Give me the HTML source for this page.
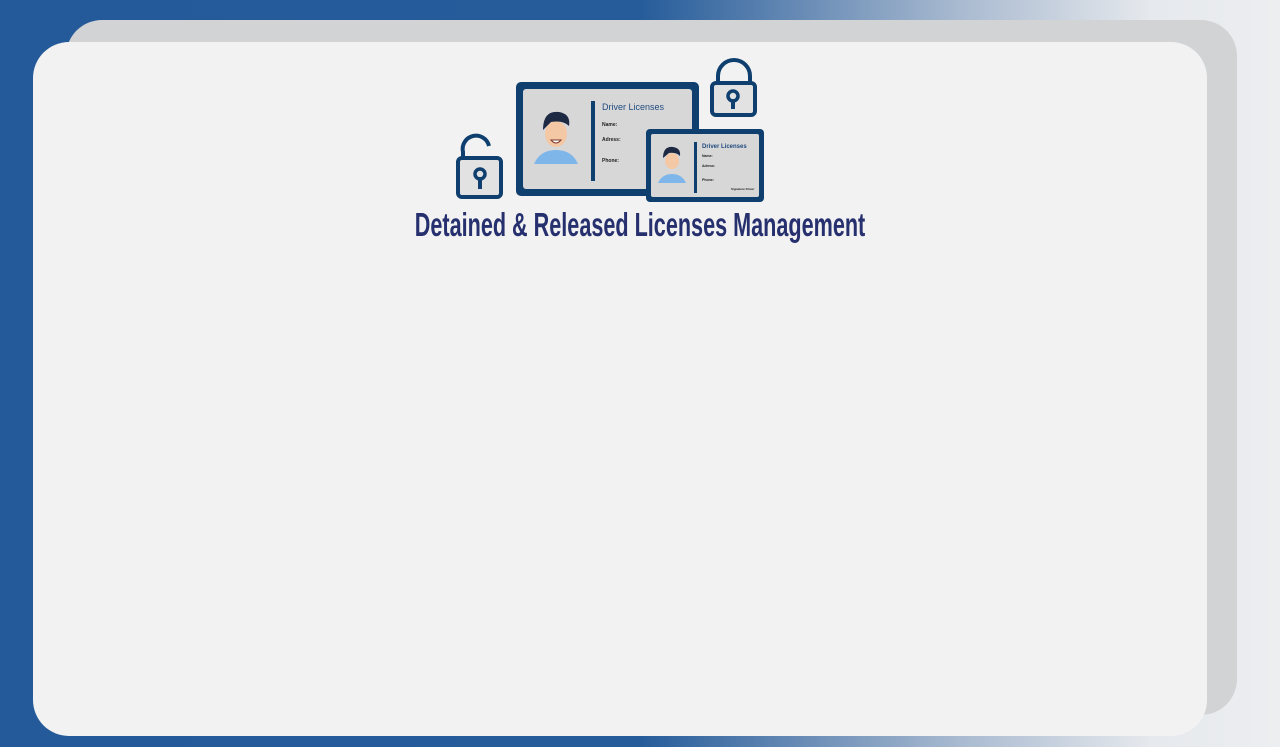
<!DOCTYPE html>
<html><head><style>
html,body{margin:0;padding:0}
body{width:1280px;height:747px;overflow:hidden;position:relative;background:linear-gradient(90deg,#245a99 0%,#265c9a 50%,#a9bad0 75%,#e6e9ed 90%,#eceef0 100%);font-family:"Liberation Sans",sans-serif}
.back{position:absolute;left:66px;top:20px;width:1171px;height:695px;background:#d1d3d5;border-radius:36px}
.front{position:absolute;left:33px;top:42px;width:1174px;height:694px;background:#f2f2f2;border-radius:36px}
.title{position:absolute;left:0;width:1280px;top:206px;text-align:center;font-family:"Liberation Sans Narrow","Liberation Sans",sans-serif;font-weight:bold;font-size:33px;color:#27306e;transform:scaleX(.655);transform-origin:640px 0;white-space:nowrap}
</style></head><body>
<div class="back"></div>
<div class="front"></div>
<svg style="position:absolute;left:0;top:0" width="1280" height="747">
<path d="M463 158 v-6 a13 13 0 0 1 26 -6" fill="none" stroke="#0f3f6e" stroke-width="4"/>
<rect x="458" y="158" width="43" height="39" rx="4" fill="#e2e2e2" stroke="#0f3f6e" stroke-width="4"/>
<circle cx="480" cy="174" r="5" fill="none" stroke="#0f3f6e" stroke-width="3.5"/><rect x="478" y="177" width="4" height="12" fill="#0f3f6e"/>
<path d="M718 86 v-10 a16 16 0 0 1 32 0 v10" fill="none" stroke="#0f3f6e" stroke-width="4"/>
<rect x="712" y="83" width="43" height="32" rx="4" fill="#e2e2e2" stroke="#0f3f6e" stroke-width="4"/>
<circle cx="733" cy="96" r="5" fill="none" stroke="#0f3f6e" stroke-width="3.5"/><rect x="731" y="99" width="4" height="10" fill="#0f3f6e"/>
<rect x="516" y="82" width="183" height="114" rx="5" fill="#0f3f6e"/>
<rect x="523" y="89" width="169" height="100" rx="3" fill="#d7d7d8"/>
<rect x="591" y="101" width="4" height="80" fill="#0f3f6e"/>
<text x="602" y="110" font-size="9" fill="#1f4b7e" font-family="Liberation Sans">Driver Licenses</text>
<text x="602" y="126" font-size="5" font-weight="bold" fill="#222">Name:</text>
<text x="602" y="141" font-size="5" font-weight="bold" fill="#222">Adress:</text>
<text x="602" y="162" font-size="5" font-weight="bold" fill="#222">Phone:</text>
<path d="M534 164 q6 -14 22 -14 q16 0 22 14z" fill="#7fb6ea"/>
<ellipse cx="556" cy="134" rx="11" ry="13" fill="#f4c7a5"/>
<path d="M543 130 q0 -20 16 -18 q12 2 10 14 q-6 -6 -18 -4z" fill="#1e2a44"/>
<path d="M551 140 h10 q-5 6 -10 0z" fill="#fff" stroke="#7a3a2a" stroke-width="1"/>
<rect x="646" y="129" width="118" height="73" rx="4" fill="#0f3f6e"/>
<rect x="651" y="134" width="108" height="63" rx="2" fill="#d7d7d8"/>
<rect x="694" y="142" width="3" height="51" fill="#0f3f6e"/>
<text x="702" y="148" font-size="6" fill="#1f4b7e" font-weight="bold">Driver Licenses</text>
<text x="702" y="157" font-size="3.5" font-weight="bold" fill="#222">Name:</text>
<text x="702" y="167" font-size="3.5" font-weight="bold" fill="#222">Adress:</text>
<text x="702" y="181" font-size="3.5" font-weight="bold" fill="#222">Phone:</text>
<text x="731" y="190" font-size="3" font-weight="bold" fill="#222">Signature Driver</text>
<path d="M658 183 q4 -9 14 -9 q10 0 14 9z" fill="#7fb6ea"/>
<ellipse cx="672" cy="161" rx="7" ry="8" fill="#f4c7a5"/>
<path d="M663 158 q0 -12 10 -11 q8 1 7 9 q-4 -4 -11 -3z" fill="#1e2a44"/>
</svg>
<div class="title">Detained &amp; Released Licenses Management</div>
</body></html>
